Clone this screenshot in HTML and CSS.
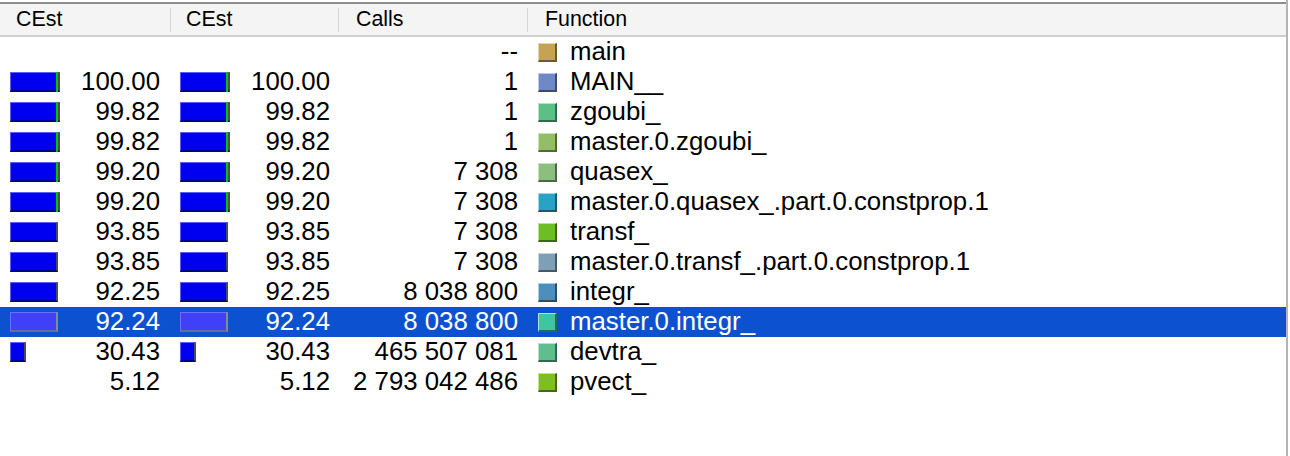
FILE: index.html
```html
<!DOCTYPE html>
<html>
<head>
<meta charset="utf-8">
<link rel="stylesheet" href="styles.css">
</head>
<body>
<div class="view">
  <div class="header">
    <div class="hcell c1">CEst</div>
    <div class="hcell c2">CEst</div>
    <div class="hcell c3">Calls</div>
    <div class="hcell c4">Function</div>
  </div>
  <div class="rows">
    <div class="row">
      <div class="cell c1"></div>
      <div class="cell c2"></div>
      <div class="cell c3 num"><span class="txt">--</span></div>
      <div class="cell c4"><span class="ico" style="background:#c4a452"></span><span class="txt">main</span></div>
    </div>
    <div class="row">
      <div class="cell c1"><span class="bar"><span class="self"></span></span><span class="val">100.00</span></div>
      <div class="cell c2"><span class="bar"><span class="self"></span></span><span class="val">100.00</span></div>
      <div class="cell c3 num"><span class="txt">1</span></div>
      <div class="cell c4"><span class="ico" style="background:#6e89c6"></span><span class="txt">MAIN__</span></div>
    </div>
    <div class="row">
      <div class="cell c1"><span class="bar"><span class="self"></span></span><span class="val">99.82</span></div>
      <div class="cell c2"><span class="bar"><span class="self"></span></span><span class="val">99.82</span></div>
      <div class="cell c3 num"><span class="txt">1</span></div>
      <div class="cell c4"><span class="ico" style="background:#5cc086"></span><span class="txt">zgoubi_</span></div>
    </div>
    <div class="row">
      <div class="cell c1"><span class="bar"><span class="self"></span></span><span class="val">99.82</span></div>
      <div class="cell c2"><span class="bar"><span class="self"></span></span><span class="val">99.82</span></div>
      <div class="cell c3 num"><span class="txt">1</span></div>
      <div class="cell c4"><span class="ico" style="background:#92bf66"></span><span class="txt">master.0.zgoubi_</span></div>
    </div>
    <div class="row">
      <div class="cell c1"><span class="bar"><span class="self"></span></span><span class="val">99.20</span></div>
      <div class="cell c2"><span class="bar"><span class="self"></span></span><span class="val">99.20</span></div>
      <div class="cell c3 num"><span class="txt">7 308</span></div>
      <div class="cell c4"><span class="ico" style="background:#8cbe80"></span><span class="txt">quasex_</span></div>
    </div>
    <div class="row">
      <div class="cell c1"><span class="bar"><span class="self"></span></span><span class="val">99.20</span></div>
      <div class="cell c2"><span class="bar"><span class="self"></span></span><span class="val">99.20</span></div>
      <div class="cell c3 num"><span class="txt">7 308</span></div>
      <div class="cell c4"><span class="ico" style="background:#2aa2c6"></span><span class="txt">master.0.quasex_.part.0.constprop.1</span></div>
    </div>
    <div class="row">
      <div class="cell c1"><span class="bar" style="width:48px"></span><span class="val">93.85</span></div>
      <div class="cell c2"><span class="bar" style="width:48px"></span><span class="val">93.85</span></div>
      <div class="cell c3 num"><span class="txt">7 308</span></div>
      <div class="cell c4"><span class="ico" style="background:#6cbe24"></span><span class="txt">transf_</span></div>
    </div>
    <div class="row">
      <div class="cell c1"><span class="bar" style="width:48px"></span><span class="val">93.85</span></div>
      <div class="cell c2"><span class="bar" style="width:48px"></span><span class="val">93.85</span></div>
      <div class="cell c3 num"><span class="txt">7 308</span></div>
      <div class="cell c4"><span class="ico" style="background:#7ea0b6"></span><span class="txt">master.0.transf_.part.0.constprop.1</span></div>
    </div>
    <div class="row">
      <div class="cell c1"><span class="bar" style="width:48px"></span><span class="val">92.25</span></div>
      <div class="cell c2"><span class="bar" style="width:48px"></span><span class="val">92.25</span></div>
      <div class="cell c3 num"><span class="txt">8 038 800</span></div>
      <div class="cell c4"><span class="ico" style="background:#4a8fbe"></span><span class="txt">integr_</span></div>
    </div>
    <div class="row selected">
      <div class="cell c1"><span class="bar" style="width:48px"></span><span class="val">92.24</span></div>
      <div class="cell c2"><span class="bar" style="width:48px"></span><span class="val">92.24</span></div>
      <div class="cell c3 num"><span class="txt">8 038 800</span></div>
      <div class="cell c4"><span class="ico" style="background:#3ec6a2"></span><span class="txt">master.0.integr_</span></div>
    </div>
    <div class="row">
      <div class="cell c1"><span class="bar" style="width:16px"></span><span class="val">30.43</span></div>
      <div class="cell c2"><span class="bar" style="width:16px"></span><span class="val">30.43</span></div>
      <div class="cell c3 num"><span class="txt">465 507 081</span></div>
      <div class="cell c4"><span class="ico" style="background:#5ebe8e"></span><span class="txt">devtra_</span></div>
    </div>
    <div class="row">
      <div class="cell c1"><span class="val">5.12</span></div>
      <div class="cell c2"><span class="val">5.12</span></div>
      <div class="cell c3 num"><span class="txt">2 793 042 486</span></div>
      <div class="cell c4"><span class="ico" style="background:#7ebe22"></span><span class="txt">pvect_</span></div>
    </div>
  </div>
</div>
</body>
</html>
```
FILE: styles.css
```css
html, body {
  margin: 0;
  padding: 0;
  background: #ffffff;
}
body {
  font-family: "Liberation Sans", Arial, sans-serif;
  color: #000;
}
.view {
  width: 1288px;
  height: 456px;
  box-sizing: border-box;
  border-right: 2px solid #b4b4b4;
  padding-top: 2px;
  overflow: hidden;
}
.header {
  display: flex;
  height: 31px;
  background: #f4f4f4;
  border-top: 2px solid #8e8e8e;
  border-bottom: 2px solid #d0d0d0;
  box-sizing: content-box;
}
.hcell {
  font-size: 21.4px;
  line-height: 30px;
  box-sizing: border-box;
  position: relative;
  padding-left: 16px;
}
.hcell + .hcell::before {
  content: "";
  position: absolute;
  left: 0;
  top: 4px;
  bottom: 3px;
  width: 1px;
  background: #d6d6d6;
}
.c1 { width: 170px; }
.c2 { width: 168px; }
.c3 { width: 189px; }
.c4 { flex: 1; }
.hcell.c3 { padding-left: 18px; }
.hcell.c4 { padding-left: 18px; }

.rows {
  display: flex;
  flex-direction: column;
}
.row {
  display: flex;
  height: 30px;
  font-size: 25.8px;
  line-height: 30px;
}
.row.selected {
  background: #0c52d0;
  color: #fff;
}
.cell {
  box-sizing: border-box;
  display: flex;
  align-items: center;
  white-space: nowrap;
}
.cell.c1 { padding-left: 10px; padding-right: 10px; }
.cell.c2 { padding-left: 10px; padding-right: 8px; }
.cell.c3 { padding-right: 9px; justify-content: flex-end; }
.cell.c4 { padding-left: 11px; }
.val, .txt {
  position: relative;
  top: -1px;
}
.val {
  margin-left: auto;
}
.bar {
  display: block;
  position: relative;
  height: 20px;
  width: 50px;
  box-sizing: border-box;
  background: #0000f0;
  border-top: 1px solid #5c5cff;
  border-left: 1px solid #5c5cff;
  border-bottom: 2px solid #000088;
  border-right: 2px solid #4c4c4c;
}
.bar .self {
  position: absolute;
  right: 0;
  top: -1px;
  bottom: -2px;
  width: 2px;
  background: #00c400;
}
.selected .bar {
  background: #4040f8;
  border-top-color: #7070ff;
  border-left-color: #7070ff;
  border-bottom-color: #6a6a9a;
  border-right-color: #8a8a8a;
}
.ico {
  display: block;
  width: 19px;
  height: 19px;
  box-sizing: border-box;
  border-top: 1px solid rgba(255,255,255,0.55);
  border-left: 1px solid rgba(255,255,255,0.55);
  border-bottom: 2px solid rgba(0,0,0,0.45);
  border-right: 2px solid rgba(0,0,0,0.45);
  margin-right: 13px;
  flex: none;
}
```
